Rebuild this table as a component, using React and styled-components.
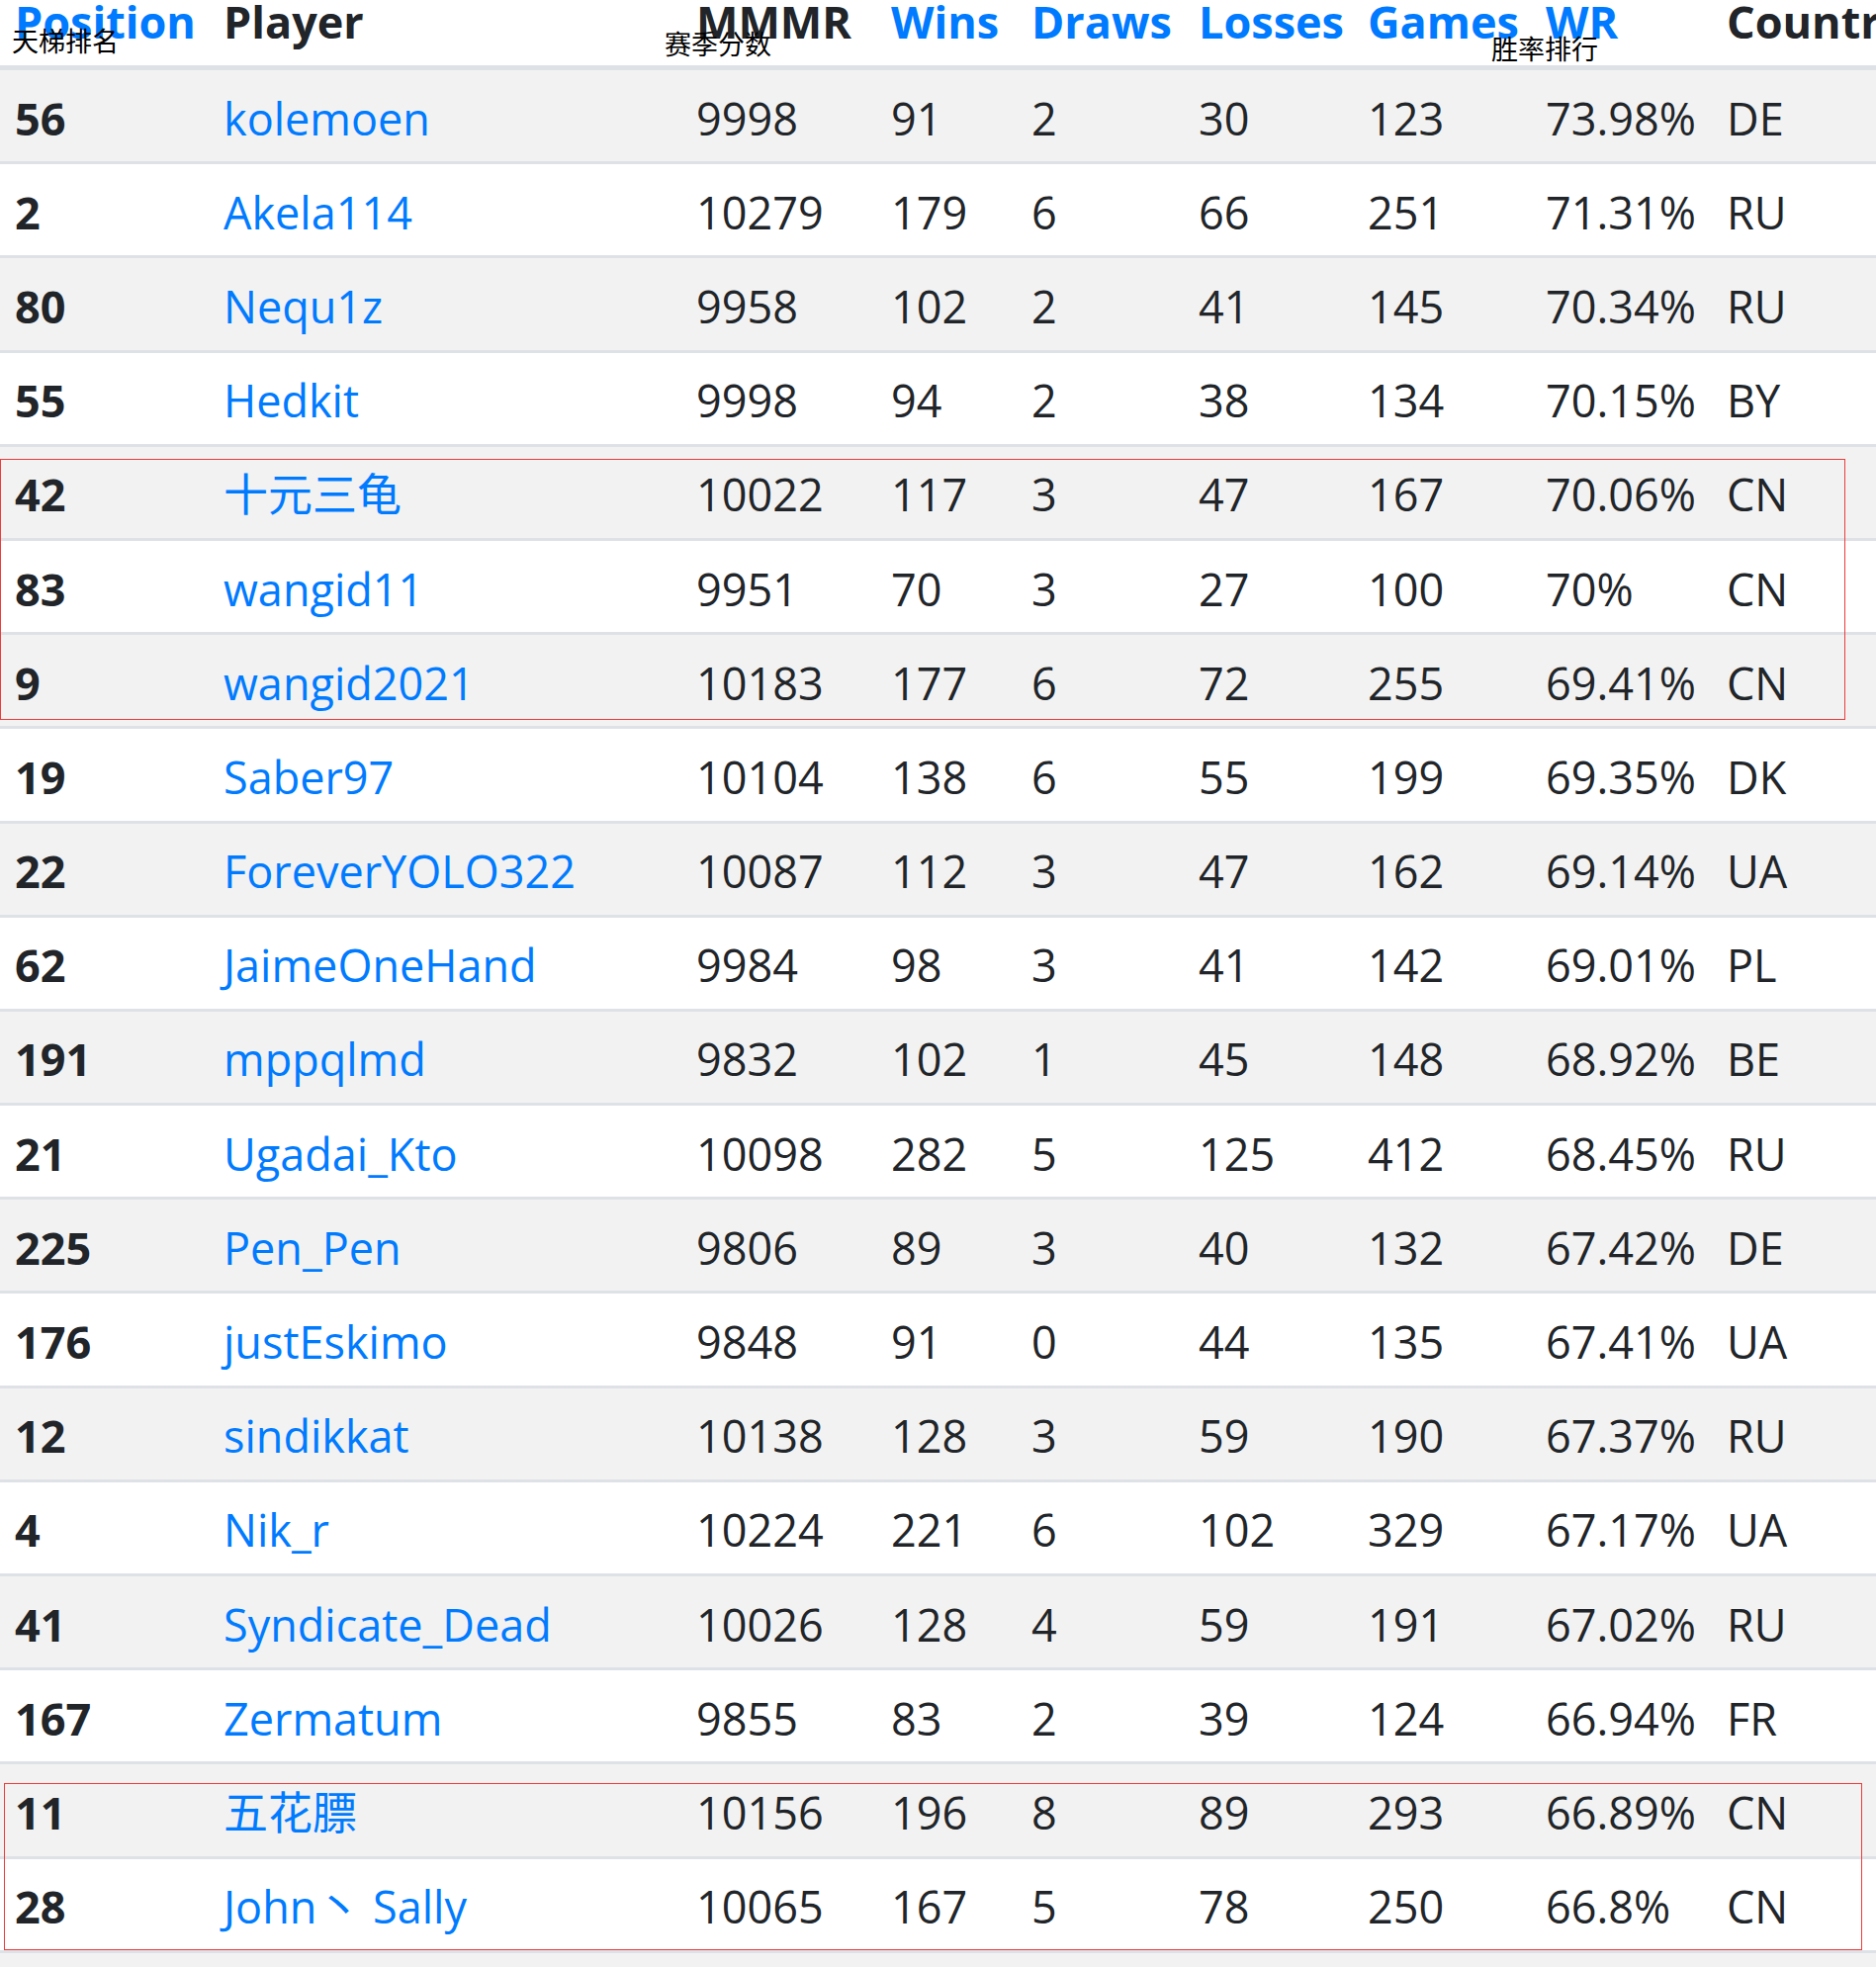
import React from "react";
import styled, { createGlobalStyle } from "styled-components";

const GlobalStyle = createGlobalStyle`
  html, body {
    margin: 0;
    padding: 0;
    overflow: hidden;
    background: #fff;
  }
  body {
    font-family: "Open Sans", "Noto Sans CJK SC", sans-serif;
    color: #212529;
  }
`;

const columns = [
  { key: "pos", title: "Position", sortable: true, width: 211 },
  { key: "player", title: "Player", width: 478 },
  { key: "mmr", title: "MMMR", width: 197 },
  { key: "wins", title: "Wins", sortable: true, width: 142 },
  { key: "draws", title: "Draws", sortable: true, width: 169 },
  { key: "losses", title: "Losses", sortable: true, width: 171 },
  { key: "games", title: "Games", sortable: true, width: 180 },
  { key: "wr", title: "WR", sortable: true, width: 183 },
  { key: "country", title: "Country", width: 220 },
];

const players = [
  [56, "kolemoen", 9998, 91, 2, 30, 123, "73.98%", "DE"],
  [2, "Akela114", 10279, 179, 6, 66, 251, "71.31%", "RU"],
  [80, "Nequ1z", 9958, 102, 2, 41, 145, "70.34%", "RU"],
  [55, "Hedkit", 9998, 94, 2, 38, 134, "70.15%", "BY"],
  [42, "十元三龟", 10022, 117, 3, 47, 167, "70.06%", "CN"],
  [83, "wangid11", 9951, 70, 3, 27, 100, "70%", "CN"],
  [9, "wangid2021", 10183, 177, 6, 72, 255, "69.41%", "CN"],
  [19, "Saber97", 10104, 138, 6, 55, 199, "69.35%", "DK"],
  [22, "ForeverYOLO322", 10087, 112, 3, 47, 162, "69.14%", "UA"],
  [62, "JaimeOneHand", 9984, 98, 3, 41, 142, "69.01%", "PL"],
  [191, "mppqlmd", 9832, 102, 1, 45, 148, "68.92%", "BE"],
  [21, "Ugadai_Kto", 10098, 282, 5, 125, 412, "68.45%", "RU"],
  [225, "Pen_Pen", 9806, 89, 3, 40, 132, "67.42%", "DE"],
  [176, "justEskimo", 9848, 91, 0, 44, 135, "67.41%", "UA"],
  [12, "sindikkat", 10138, 128, 3, 59, 190, "67.37%", "RU"],
  [4, "Nik_r", 10224, 221, 6, 102, 329, "67.17%", "UA"],
  [41, "Syndicate_Dead", 10026, 128, 4, 59, 191, "67.02%", "RU"],
  [167, "Zermatum", 9855, 83, 2, 39, 124, "66.94%", "FR"],
  [11, "五花膘", 10156, 196, 8, 89, 293, "66.89%", "CN"],
  [28, "John丶 Sally", 10065, 167, 5, 78, 250, "66.8%", "CN"],
];

// chinese notes written over the header
const notes = {
  pos: { text: "天梯排名", left: 12, top: 26 },
  mmr: { text: "赛季分数", left: -17, top: 29 },
  wr: { text: "胜率排行", left: -40, top: 34 },
};

const Wrapper = styled.div`
  position: relative;
  width: 1951px;
`;

const Table = styled.table`
  width: 1951px;
  table-layout: fixed;
  border-collapse: separate;
  border-spacing: 0;
  font-size: 45px;
`;

const HeadCell = styled.th`
  position: relative;
  height: 66px;
  padding: 0 15px;
  vertical-align: top;
  text-align: left;
  line-height: 44px;
  font-weight: 700;
  white-space: nowrap;
  color: ${(p) => (p.$link ? "#007bff" : "#212529")};
  border-bottom: 5px solid #dee2e6;
`;

const Note = styled.span`
  position: absolute;
  left: ${(p) => p.$left}px;
  top: ${(p) => p.$top}px;
  font-family: "Noto Sans CJK SC", sans-serif;
  font-size: 27px;
  line-height: 30px;
  font-weight: 400;
  color: #000;
  white-space: nowrap;
`;

const Row = styled.tr`
  background: ${(p) => (p.$striped ? "#f2f2f2" : "#fff")};
`;

const Cell = styled.td`
  height: 95.2px;
  box-sizing: border-box;
  padding: 5px 15px 0;
  vertical-align: middle;
  line-height: 60px;
  white-space: nowrap;
  border-bottom: 3px solid #dee2e6;
  font-weight: ${(p) => (p.$bold ? 700 : 400)};
`;

const PlayerLink = styled.a`
  color: #007bff;
  text-decoration: none;
  font-family: "Open Sans", "Noto Sans CJK SC", sans-serif;
`;

const Mark = styled.div`
  position: absolute;
  left: ${(p) => p.$left}px;
  top: ${(p) => p.$top}px;
  width: ${(p) => p.$width}px;
  height: ${(p) => p.$height}px;
  box-sizing: border-box;
  border: 1px solid #ee3b3b;
  pointer-events: none;
`;

export default function App() {
  return (
    <>
      <GlobalStyle />
      <Wrapper>
        <Table>
          <colgroup>
            {columns.map((c) => (
              <col key={c.key} style={{ width: c.width }} />
            ))}
          </colgroup>
          <thead>
            <tr>
              {columns.map((c) => (
                <HeadCell key={c.key} $link={c.sortable}>
                  {c.title}
                  {notes[c.key] && (
                    <Note $left={notes[c.key].left} $top={notes[c.key].top}>
                      {notes[c.key].text}
                    </Note>
                  )}
                </HeadCell>
              ))}
            </tr>
          </thead>
          <tbody>
            {players.map((p, i) => (
              <Row key={p[1]} $striped={i % 2 === 0}>
                <Cell $bold>{p[0]}</Cell>
                <Cell>
                  <PlayerLink href="#">{p[1]}</PlayerLink>
                </Cell>
                {p.slice(2).map((v, j) => (
                  <Cell key={j}>{v}</Cell>
                ))}
              </Row>
            ))}
            <Row $striped>
              {columns.map((c) => (
                <Cell key={c.key}>&nbsp;</Cell>
              ))}
            </Row>
          </tbody>
        </Table>
        <Mark $left={0} $top={464} $width={1866} $height={264} />
        <Mark $left={4} $top={1803} $width={1879} $height={169} />
      </Wrapper>
    </>
  );
}
